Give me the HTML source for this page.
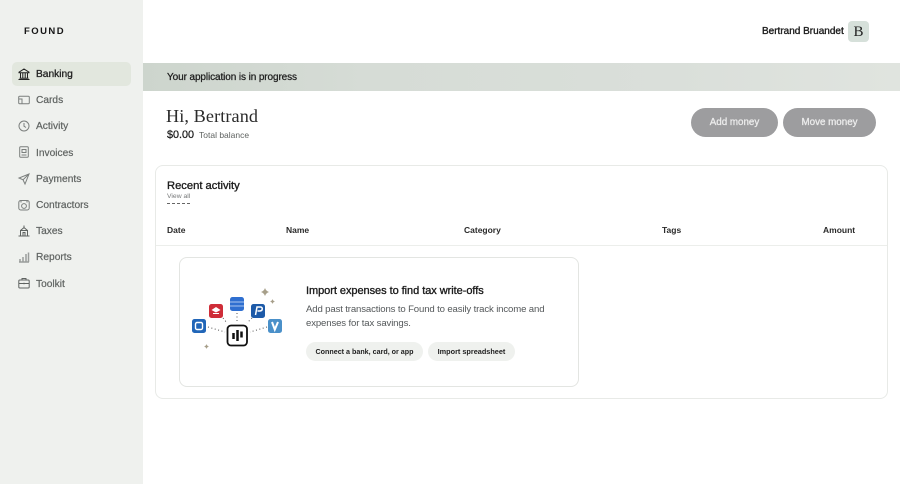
<!DOCTYPE html>
<html>
<head>
<meta charset="utf-8">
<style>
html,body{margin:0;padding:0;width:900px;height:484px;overflow:hidden;background:#fff}
body{position:relative;font-family:"Liberation Sans",sans-serif;color:#1c1c1c}
.a{position:absolute;white-space:nowrap;line-height:14px}
.nav{left:36px;font-size:10.2px;color:#5f6361;-webkit-text-stroke:.2px #5f6361}
svg{position:absolute;overflow:visible}
.i{left:18px;width:12px;height:12px;fill:none;stroke:#7b7f7d;stroke-width:1}
.th{font-size:8.5px;font-weight:bold;top:223px;color:#2a2a2a}
.btn{top:108px;height:28.5px;background:#9d9d9f;border-radius:15px;font-size:9.8px;line-height:30px;text-align:center;color:#ececec;-webkit-text-stroke:.3px #ececec}
</style>
</head>
<body>
<div class="a" style="left:0;top:0;width:143px;height:484px;background:#eff1ee"></div>
<div class="a" style="left:24px;top:25px;font-size:9.5px;font-weight:bold;letter-spacing:1.45px;color:#161616">FOUND</div>
<div class="a" style="left:12px;top:62px;width:119px;height:24px;background:#e2e7de;border-radius:5px"></div>

<div class="a nav" style="top:68px;color:#222;-webkit-text-stroke:.3px #222">Banking</div>
<div class="a nav" style="top:94px">Cards</div>
<div class="a nav" style="top:120px">Activity</div>
<div class="a nav" style="top:147px">Invoices</div>
<div class="a nav" style="top:173px">Payments</div>
<div class="a nav" style="top:199px">Contractors</div>
<div class="a nav" style="top:225px">Taxes</div>
<div class="a nav" style="top:251px">Reports</div>
<div class="a nav" style="top:278px">Toolkit</div>

<svg class="i" style="top:68px;stroke:#222" viewBox="0 0 12 12"><path d="M1 4.2 6 1l5 3.2v.6H1zM2.500 5v5M4.800 5v5M7.200 5v5M9.500 5v5M1.500 10.200h9M.5 11.500h11"/></svg>
<svg class="i" style="top:94px" viewBox="0 0 12 12"><rect x=".7" y="2.300" width="10.600" height="7.400" rx="1"/><path d="M.7 5h3.300v4.700"/></svg>
<svg class="i" style="top:120px" viewBox="0 0 12 12"><circle cx="6" cy="6" r="5"/><path d="M6 3v3.200l2 1.300"/></svg>
<svg class="i" style="top:146px" viewBox="0 0 12 12"><rect x="1.700" y=".8" width="8.600" height="10.400" rx="1"/><path d="M4 3.500h4v3H4zM3.500 9h5"/></svg>
<svg class="i" style="top:173px" viewBox="0 0 12 12"><path d="M11 1 1 5l4 1.800L7 11zM5 6.800 11 1"/></svg>
<svg class="i" style="top:199px" viewBox="0 0 12 12"><rect x=".8" y="1.500" width="10.400" height="9.500" rx="2"/><path d="M3 1.500v2M9 1.500v2"/><circle cx="6" cy="7" r="2.400"/></svg>
<svg class="i" style="top:225px;stroke:#5f6361" viewBox="0 0 12 12"><path d="M6 .5v2M2.500 5.500 6 2.500l3.500 3M2 5.500h8M2.500 5.500v5M9.500 5.500v5M.5 11h11M5 7.500h2V11H5z"/></svg>
<svg class="i" style="top:251px;stroke:#9a9d9b" viewBox="0 0 12 12"><path d="M1 11h10M2 8v3M5 6v5M8 3v8M10.500 1.500v9.500" stroke-width="1.500"/></svg>
<svg class="i" style="top:277px;stroke:#5f6361" viewBox="0 0 12 12"><rect x=".8" y="3" width="10.400" height="8" rx="1"/><path d="M4 3V1.500h4V3M.8 6.500h10.400M6 5.800v1.500"/></svg>

<div class="a" style="left:762px;top:25px;font-size:10px;color:#1c1c1c;-webkit-text-stroke:.35px #1c1c1c">Bertrand Bruandet</div>
<div class="a" style="left:848px;top:21px;width:21px;height:21px;background:#d6e0da;border-radius:4px;font:15px/23px 'Liberation Serif',serif;text-align:center;color:#222">B</div>

<div class="a" style="left:143px;top:63px;width:757px;height:28px;background:linear-gradient(90deg,#cdd5cd 0%,#d6dcd6 30%,#dadfda 70%,#e0e4df 100%)"></div>
<div class="a" style="left:167px;top:71px;font-size:10px;letter-spacing:-.1px;color:#1c1c1c;-webkit-text-stroke:.25px #1c1c1c">Your application is in progress</div>

<div class="a" style="left:166px;top:105px;font:18.2px/22px 'Liberation Serif',serif;color:#2b2b2b;letter-spacing:.1px">Hi, Bertrand</div>
<div class="a" style="left:167px;top:128px;font-size:10.8px;color:#1c1c1c;-webkit-text-stroke:.25px #1c1c1c">$0.00</div>
<div class="a" style="left:199px;top:128px;font-size:8.5px;color:#5f6361">Total balance</div>

<div class="a btn" style="left:691px;width:87px">Add money</div>
<div class="a btn" style="left:783px;width:93px">Move money</div>

<div class="a" style="left:155px;top:165px;width:733px;height:234px;box-sizing:border-box;border:1px solid #e8eae7;border-radius:8px"></div>
<div class="a" style="left:167px;top:179px;font-size:11.2px;color:#1c1c1c;-webkit-text-stroke:.35px #1c1c1c">Recent activity</div>
<div class="a" style="left:167px;top:191px;font-size:6.8px;line-height:12px;color:#77797a;border-bottom:1px dashed #666;height:12px">View all</div>

<div class="a th" style="left:167px">Date</div>
<div class="a th" style="left:286px">Name</div>
<div class="a th" style="left:464px">Category</div>
<div class="a th" style="left:662px">Tags</div>
<div class="a th" style="left:823px">Amount</div>
<div class="a" style="left:156px;top:245px;width:731px;height:1px;background:#eceeeb"></div>

<div class="a" style="left:179px;top:257px;width:400px;height:130px;box-sizing:border-box;border:1px solid #e3e5e2;border-radius:8px"></div>

<svg style="left:180px;top:275px;width:115px;height:85px" viewBox="0 0 115 85">
<g fill="none" stroke="#555" stroke-width="1" stroke-dasharray="1 2.500">
<path d="M28 52 45 57M43 43 47 48M57 38V48M72 43 67 48M87 52 70 57"/>
</g>
<rect x="12" y="44" width="14" height="14" rx="2.500" fill="#2166b8"/>
<rect x="15.500" y="47.500" width="7" height="7" rx="1.500" fill="none" stroke="#fff" stroke-width="1.400"/>
<rect x="29" y="29" width="14" height="14" rx="2.500" fill="#cf2d38"/>
<path d="M31.500 35 36 32l4.500 3-4.500 2.500z" fill="#fff"/><path d="M33 38.500h6" stroke="#fff" stroke-width="1"/>
<rect x="50" y="22" width="14" height="14" rx="2.500" fill="#2f6fd0"/>
<path d="M50 27h14M50 31h14" stroke="#a9c6f0" stroke-width="1"/>
<rect x="71" y="29" width="14" height="14" rx="2.500" fill="#1d5aa8"/>
<path d="M75.500 40 77 32h3.500c2.500 0 2.500 4-1 4h-2" fill="none" stroke="#fff" stroke-width="1.500"/>
<rect x="88" y="44" width="14" height="14" rx="2.500" fill="#4a90c9"/>
<path d="M92 47 94.800 54.500 98 47" fill="none" stroke="#fff" stroke-width="2"/>
<rect x="47.500" y="50.500" width="19.500" height="20" rx="3.500" fill="#fff" stroke="#111" stroke-width="1.800"/>
<path d="M53.500 58v6M57.500 55v11M61.500 56.500v6" stroke="#111" stroke-width="2.500"/>
<path d="M85 13q1 3 4 4-3 1-4 4-1-3-4-4 3-1 4-4z" fill="#a79f8a"/>
<path d="M92.500 24q.5 2 2.500 2.500-2 .5-2.500 2.500-.5-2-2.500-2.500 2-.5 2.500-2.500z" fill="#a79f8a"/>
<path d="M26.500 69q.5 2 2.500 2.500-2 .5-2.500 2.500-.5-2-2.500-2.500 2-.5 2.500-2.500z" fill="#a79f8a"/>
</svg>

<div class="a" style="left:306px;top:284px;font-size:11px;letter-spacing:-.05px;color:#1c1c1c;-webkit-text-stroke:.35px #1c1c1c">Import expenses to find tax write-offs</div>
<div class="a" style="left:306px;top:303px;font-size:9.6px;letter-spacing:-.14px;color:#54585a">Add past transactions to Found to easily track income and</div>
<div class="a" style="left:306px;top:317px;font-size:9.6px;letter-spacing:-.14px;color:#54585a">expenses for tax savings.</div>
<div class="a" style="left:306px;top:342px;width:117px;height:19px;background:#eff1ee;border-radius:10px;font-size:7.15px;font-weight:bold;line-height:20px;text-align:center;color:#222">Connect a bank, card, or app</div>
<div class="a" style="left:428px;top:342px;width:87px;height:19px;background:#eff1ee;border-radius:10px;font-size:7.3px;font-weight:bold;line-height:20px;text-align:center;color:#222">Import spreadsheet</div>
</body>
</html>
